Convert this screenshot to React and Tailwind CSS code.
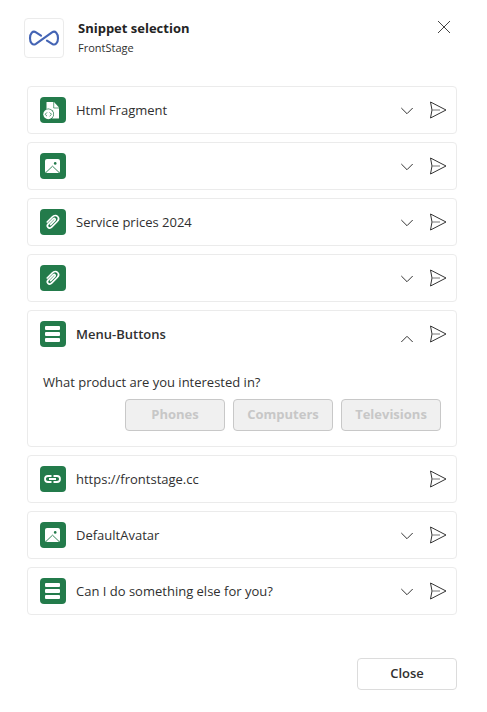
import React, { useState } from "react";

const snippets = [
  { id: 1, type: "html", title: "Html Fragment", expandable: true },
  { id: 2, type: "image", title: "", expandable: true },
  { id: 3, type: "file", title: "Service prices 2024", expandable: true },
  { id: 4, type: "file", title: "", expandable: true },
  {
    id: 5,
    type: "menu",
    title: "Menu-Buttons",
    expandable: true,
    text: "What product are you interested in?",
    buttons: ["Phones", "Computers", "Televisions"],
  },
  { id: 6, type: "link", title: "https://frontstage.cc", expandable: false },
  { id: 7, type: "image", title: "DefaultAvatar", expandable: true },
  { id: 8, type: "menu", title: "Can I do something else for you?", expandable: true },
];

function Logo() {
  return (
    <div className="flex size-10 shrink-0 items-center justify-center rounded border border-[#ebebeb]">
      <svg
        viewBox="0 0 32 16"
        className="h-4 w-8"
        fill="none"
        stroke="#4464b4"
        strokeWidth="2.1"
        strokeLinecap="round"
        strokeLinejoin="round"
        aria-hidden="true"
      >
        <path d="M13 5.600 8 2.300C4.700.2 2 3.500 2 8.200s2.700 7.700 5.900 5.600L24 2.300c3.300-2.100 6 1.200 6 5.900s-2.700 7.700-5.900 5.600L19 10.600" />
      </svg>
    </div>
  );
}

function TypeIcon({ type }) {
  return (
    <span className="flex size-[26px] shrink-0 items-center justify-center rounded bg-[#237b4b]">
      <svg viewBox="0 0 26 26" className="size-[26px]" fill="none" aria-hidden="true">
        {type === "html" && (
          <>
            <path d="M6.500 5.500q0-.5.5-.5h7l5 5.500v10.500q0 .5-.5.5h-12z" fill="#fff" />
            <path d="M13.700 5v6H19" stroke="#237b4b" strokeWidth="0.7" />
            <circle cx="8.3" cy="17.3" r="5.7" fill="#237b4b" />
            <circle cx="8.3" cy="17.3" r="5" fill="#fff" />
            <path
              d="m7 15.400-1.900 1.900L7 19.200M9.600 15.400l1.900 1.900-1.900 1.900"
              stroke="#237b4b"
              strokeWidth="0.8"
            />
          </>
        )}

        {type === "image" && (
          <>
            <rect x="5" y="6" width="15" height="14" rx="2" fill="#fff" />
            <path d="m6 19.400 6.500-6.200 6.500 6.200" stroke="#237b4b" strokeWidth="0.9" />
            <circle cx="15.2" cy="10.4" r="1.3" fill="#237b4b" />
          </>
        )}

        {type === "file" && (
          <path
            d="m7.200 13 5-5c1.900-1.900 4.200-1.700 5.400-.5s1.300 3.300-.4 5l-5.600 5.600c-1.200 1.200-2.700 1.200-3.600.3s-.9-2.300.3-3.500l5-5c.5-.5 1.200-.5 1.600-.1s.4 1.100-.1 1.600L10.600 15.600"
            stroke="#fff"
            strokeWidth="1.7"
            strokeLinecap="round"
          />
        )}

        {type === "menu" && (
          <g fill="#fff">
            <rect x="5" y="5" width="15" height="4" rx="1" />
            <rect x="5" y="11" width="15" height="4" rx="1" />
            <rect x="5" y="17" width="15" height="4" rx="1" />
          </g>
        )}

        {type === "link" && (
          <path
            d="M11.500 10H8a3 3 0 0 0 0 6h3.500M13.500 10H17a3 3 0 0 1 0 6h-3.500M9 13h7"
            stroke="#fff"
            strokeWidth="1.8"
          />
        )}
      </svg>
    </span>
  );
}

function SendIcon() {
  return (
    <svg
      viewBox="0 0 18 18"
      className="size-[18px]"
      fill="none"
      stroke="#333"
      strokeLinejoin="round"
      aria-hidden="true"
    >
      <path d="M1.500 1 17 9 1.500 17 3 9z" />
      <path d="M3 9h8" stroke="#777" />
    </svg>
  );
}

function Chevron({ open }) {
  return (
    <svg viewBox="0 0 14 8" className="h-2 w-3.5" fill="none" stroke="#333" aria-hidden="true">
      {open ? <path d="m1.300 7 5.700-5.700L12.700 7" /> : <path d="m1.300 1 5.700 5.700L12.700 1" />}
    </svg>
  );
}

function SnippetCard({ snippet, open, onToggle }) {
  return (
    <li className="rounded border border-[#ebebeb] bg-white">
      <div className="flex h-[46px] items-center pr-[9px] pl-3">
        <TypeIcon type={snippet.type} />
        <span
          className={`ml-2.5 flex-1 truncate text-[13px] leading-5 ${open ? "font-semibold" : ""}`}
        >
          {snippet.title}
        </span>

        {snippet.expandable && (
          <button
            type="button"
            aria-label={open ? "Collapse" : "Expand"}
            aria-expanded={open}
            onClick={onToggle}
            className={`mr-[15px] shrink-0 ${open ? "pt-2.5" : "pt-0.5"}`}
          >
            <Chevron open={open} />
          </button>
        )}

        <button type="button" aria-label="Send" className="shrink-0">
          <SendIcon />
        </button>
      </div>

      {open && snippet.text && (
        <div className="px-[15px] pt-[15px] pb-[15px]">
          <p className="mb-[7px] text-[13px] leading-5">{snippet.text}</p>
          <div className="flex justify-end gap-2">
            {snippet.buttons.map((label) => (
              <button
                key={label}
                type="button"
                disabled
                className="h-8 w-[100px] rounded border border-[#c8c8c8] bg-[#f0f0f0] text-[13px] font-bold text-[#c7c7c7]"
              >
                {label}
              </button>
            ))}
          </div>
        </div>
      )}
    </li>
  );
}

export default function App() {
  const [openId, setOpenId] = useState(5);

  return (
    <main className="bg-white pt-[18px] pb-[22px] font-['Open_Sans','Noto_Sans',sans-serif] text-[#303030]">
      <header className="flex items-start pr-9 pl-6">
        <Logo />
        <div className="ml-3.5 flex-1">
          <h1 className="text-[13px] leading-5 font-bold text-[#242424]">Snippet selection</h1>
          <p className="text-[11px] leading-5">FrontStage</p>
        </div>
        <button type="button" aria-label="Close dialog" className="mt-0.5">
          <svg viewBox="0 0 14 14" className="size-3.5" stroke="#444" aria-hidden="true">
            <path d="m1 1 12 12M13 1 1 13" />
          </svg>
        </button>
      </header>

      <ul className="mt-7 mr-[30px] ml-[27px] flex flex-col gap-2">
        {snippets.map((snippet) => (
          <SnippetCard
            key={snippet.id}
            snippet={snippet}
            open={openId === snippet.id}
            onToggle={() => setOpenId(openId === snippet.id ? null : snippet.id)}
          />
        ))}
      </ul>

      <footer className="mt-[43px] mr-[30px] flex justify-end">
        <button
          type="button"
          className="h-8 w-[100px] rounded border border-[#dcdcdc] bg-white text-[13px] font-semibold"
        >
          Close
        </button>
      </footer>
    </main>
  );
}
